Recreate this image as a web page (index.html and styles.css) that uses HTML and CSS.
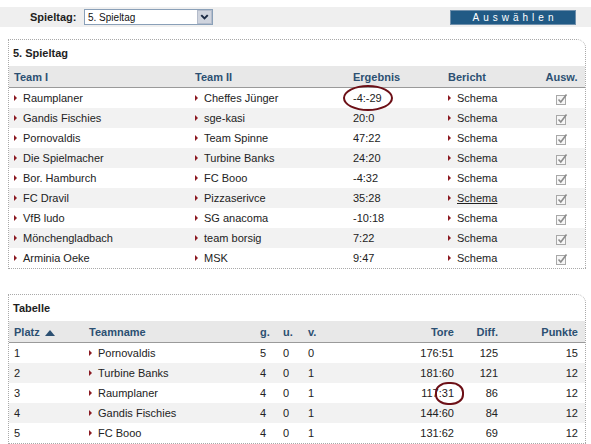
FILE: index.html
```html
<!DOCTYPE html>
<html lang="de">
<head>
<meta charset="utf-8">
<title>Spieltag</title>
<link rel="stylesheet" href="styles.css">
</head>
<body>
<div class="topbar">
  <span class="label">Spieltag:</span>
  <div class="select">
    <span class="select-text">5. Spieltag</span>
    <span class="select-btn"><svg width="14" height="12" viewBox="0 0 14 12"><path d="M3.5 4 L7 7.5 L10.5 4" fill="none" stroke="#1b2a44" stroke-width="2.2"/></svg></span>
  </div>
  <span class="btn">Auswählen</span>
</div>

<div class="box">
  <div class="box-title">5. Spieltag</div>
  <table class="grid">
    <colgroup><col class="c1"><col class="c2"><col class="c3"><col class="c4"><col class="c5"></colgroup>
    <thead>
      <tr><th>Team I</th><th>Team II</th><th>Ergebnis</th><th>Bericht</th><th class="center">Ausw.</th></tr>
    </thead>
    <tbody>
      <tr><td><i class="arr"></i>Raumplaner</td><td><i class="arr"></i>Cheffes Jünger</td><td><span class="circ1">-4:-29</span></td><td><i class="arr"></i>Schema</td><td class="center"><svg class="chk" width="13" height="12" viewBox="0 0 13 12"><rect x="1.5" y="2.5" width="9" height="9" fill="#f6f6f6" stroke="#a8a8a8"/><path d="M3.5 6.5 L5.8 9 L11.5 1.5" fill="none" stroke="#8c8c8c" stroke-width="1.6"/></svg></td></tr>
      <tr><td><i class="arr"></i>Gandis Fischies</td><td><i class="arr"></i>sge-kasi</td><td>20:0</td><td><i class="arr"></i>Schema</td><td class="center"><svg class="chk" width="13" height="12" viewBox="0 0 13 12"><rect x="1.5" y="2.5" width="9" height="9" fill="#f6f6f6" stroke="#a8a8a8"/><path d="M3.5 6.5 L5.8 9 L11.5 1.5" fill="none" stroke="#8c8c8c" stroke-width="1.6"/></svg></td></tr>
      <tr><td><i class="arr"></i>Pornovaldis</td><td><i class="arr"></i>Team Spinne</td><td>47:22</td><td><i class="arr"></i>Schema</td><td class="center"><svg class="chk" width="13" height="12" viewBox="0 0 13 12"><rect x="1.5" y="2.5" width="9" height="9" fill="#f6f6f6" stroke="#a8a8a8"/><path d="M3.5 6.5 L5.8 9 L11.5 1.5" fill="none" stroke="#8c8c8c" stroke-width="1.6"/></svg></td></tr>
      <tr><td><i class="arr"></i>Die Spielmacher</td><td><i class="arr"></i>Turbine Banks</td><td>24:20</td><td><i class="arr"></i>Schema</td><td class="center"><svg class="chk" width="13" height="12" viewBox="0 0 13 12"><rect x="1.5" y="2.5" width="9" height="9" fill="#f6f6f6" stroke="#a8a8a8"/><path d="M3.5 6.5 L5.8 9 L11.5 1.5" fill="none" stroke="#8c8c8c" stroke-width="1.6"/></svg></td></tr>
      <tr><td><i class="arr"></i>Bor. Hamburch</td><td><i class="arr"></i>FC Booo</td><td>-4:32</td><td><i class="arr"></i>Schema</td><td class="center"><svg class="chk" width="13" height="12" viewBox="0 0 13 12"><rect x="1.5" y="2.5" width="9" height="9" fill="#f6f6f6" stroke="#a8a8a8"/><path d="M3.5 6.5 L5.8 9 L11.5 1.5" fill="none" stroke="#8c8c8c" stroke-width="1.6"/></svg></td></tr>
      <tr><td><i class="arr"></i>FC Dravil</td><td><i class="arr"></i>Pizzaserivce</td><td>35:28</td><td><i class="arr"></i><span class="ul">Schema</span></td><td class="center"><svg class="chk" width="13" height="12" viewBox="0 0 13 12"><rect x="1.5" y="2.5" width="9" height="9" fill="#f6f6f6" stroke="#a8a8a8"/><path d="M3.5 6.5 L5.8 9 L11.5 1.5" fill="none" stroke="#8c8c8c" stroke-width="1.6"/></svg></td></tr>
      <tr><td><i class="arr"></i>VfB ludo</td><td><i class="arr"></i>SG anacoma</td><td>-10:18</td><td><i class="arr"></i>Schema</td><td class="center"><svg class="chk" width="13" height="12" viewBox="0 0 13 12"><rect x="1.5" y="2.5" width="9" height="9" fill="#f6f6f6" stroke="#a8a8a8"/><path d="M3.5 6.5 L5.8 9 L11.5 1.5" fill="none" stroke="#8c8c8c" stroke-width="1.6"/></svg></td></tr>
      <tr><td><i class="arr"></i>Mönchengladbach</td><td><i class="arr"></i>team borsig</td><td>7:22</td><td><i class="arr"></i>Schema</td><td class="center"><svg class="chk" width="13" height="12" viewBox="0 0 13 12"><rect x="1.5" y="2.5" width="9" height="9" fill="#f6f6f6" stroke="#a8a8a8"/><path d="M3.5 6.5 L5.8 9 L11.5 1.5" fill="none" stroke="#8c8c8c" stroke-width="1.6"/></svg></td></tr>
      <tr><td><i class="arr"></i>Arminia Oeke</td><td><i class="arr"></i>MSK</td><td>9:47</td><td><i class="arr"></i>Schema</td><td class="center"><svg class="chk" width="13" height="12" viewBox="0 0 13 12"><rect x="1.5" y="2.5" width="9" height="9" fill="#f6f6f6" stroke="#a8a8a8"/><path d="M3.5 6.5 L5.8 9 L11.5 1.5" fill="none" stroke="#8c8c8c" stroke-width="1.6"/></svg></td></tr>
    </tbody>
  </table>
</div>

<div class="box box2">
  <div class="box-title">Tabelle</div>
  <table class="grid">
    <colgroup><col class="t1"><col class="t2"><col class="t3"><col class="t4"><col class="t5"><col class="t6"><col class="t7"><col class="t8"></colgroup>
    <thead>
      <tr><th>Platz <svg class="sort" width="10" height="7" viewBox="0 0 10 7"><path d="M0 7 L5 1 L10 7 Z" fill="#2c5072"/></svg></th><th>Teamname</th><th>g.</th><th>u.</th><th>v.</th><th class="right">Tore</th><th class="right">Diff.</th><th class="right last">Punkte</th></tr>
    </thead>
    <tbody>
      <tr><td>1</td><td><i class="arr"></i>Pornovaldis</td><td>5</td><td>0</td><td>0</td><td class="right">176:51</td><td class="right">125</td><td class="right last">15</td></tr>
      <tr><td>2</td><td><i class="arr"></i>Turbine Banks</td><td>4</td><td>0</td><td>1</td><td class="right">181:60</td><td class="right">121</td><td class="right last">12</td></tr>
      <tr><td>3</td><td><i class="arr"></i>Raumplaner</td><td>4</td><td>0</td><td>1</td><td class="right">117<span class="circ2">:31</span></td><td class="right">86</td><td class="right last">12</td></tr>
      <tr><td>4</td><td><i class="arr"></i>Gandis Fischies</td><td>4</td><td>0</td><td>1</td><td class="right">144:60</td><td class="right">84</td><td class="right last">12</td></tr>
      <tr><td>5</td><td><i class="arr"></i>FC Booo</td><td>4</td><td>0</td><td>1</td><td class="right">131:62</td><td class="right">69</td><td class="right last">12</td></tr>
    </tbody>
  </table>
</div>
</body>
</html>
```

FILE: styles.css
```css
html, body {
  margin: 0;
  padding: 0;
  background: #fff;
}
body {
  font-family: "Liberation Sans", Arial, sans-serif;
  font-size: 11px;
  color: #222;
}

.topbar {
  margin-top: 7px;
  height: 20px;
  background: #efefef;
  display: flex;
  align-items: center;
  padding-left: 30px;
}
.label {
  font-weight: bold;
  font-size: 11px;
  color: #1e1e1e;
  width: 54px;
}
.select {
  width: 129px;
  height: 16px;
  box-sizing: border-box;
  border: 1px solid #8aa0b8;
  background: #fff;
  display: flex;
  align-items: center;
}
.select-text {
  font-size: 10px;
  padding-left: 3px;
  color: #111;
}
.select-btn {
  margin-left: auto;
  width: 15px;
  height: 14px;
  box-sizing: border-box;
  background: #cfd4de;
  border: 1px solid #b4bccb;
  display: flex;
  align-items: center;
  justify-content: center;
}
.select-btn svg {
  display: block;
}
.btn {
  margin-left: 237px;
  width: 126px;
  height: 15px;
  box-sizing: border-box;
  background: #215a85;
  border: 1px solid #6f8fab;
  color: #fff;
  font-size: 10px;
  letter-spacing: 4px;
  text-indent: 4px;
  line-height: 13px;
  text-align: center;
}

.box {
  margin: 12px 5px 0 8px;
  border: 1px dotted #a9a9a9;
  border-top-right-radius: 9px;
}
.box2 {
  margin-top: 25px;
}
.box-title {
  height: 26px;
  line-height: 26px;
  padding-left: 4px;
  font-weight: bold;
  color: #1e1e1e;
}

.grid {
  width: 100%;
  border-collapse: collapse;
  table-layout: fixed;
}
.grid th {
  height: 21px;
  padding: 0 0 0 5px;
  background: #e8e8e8;
  color: #2c5072;
  font-weight: bold;
  text-align: left;
  border-bottom: 1px solid #9a9a9a;
  white-space: nowrap;
}
.grid td {
  height: 20px;
  padding: 0 0 0 5px;
  color: #222;
  white-space: nowrap;
}
.grid tbody tr:nth-child(even) td {
  background: #f2f2f2;
}
.grid .center {
  text-align: center;
  padding-left: 0;
}
.grid .right {
  text-align: right;
  padding-left: 0;
  padding-right: 5px;
}
.grid .last {
  padding-right: 7px;
}

.c1 { width: 181px; }
.c2 { width: 158px; }
.c3 { width: 95px; }
.c4 { width: 95px; }
.c5 { width: 47px; }

.t1 { width: 75px; }
.t2 { width: 171px; }
.t3 { width: 23px; }
.t4 { width: 25px; }
.t5 { width: 77px; }
.t6 { width: 79px; }
.t7 { width: 44px; }
.t8 { width: 82px; }

.arr {
  display: inline-block;
  width: 0;
  height: 0;
  border-left: 3px solid #8b1a22;
  border-top: 3px solid transparent;
  border-bottom: 3px solid transparent;
  margin-right: 6px;
  vertical-align: 1px;
}
.chk {
  display: inline-block;
  vertical-align: middle;
}
.sort {
  vertical-align: 0;
  margin-left: 2px;
}
.ul {
  text-decoration: underline;
}

.circ1, .circ2 {
  position: relative;
}
.circ1::after {
  content: "";
  position: absolute;
  left: -10px;
  top: -7px;
  width: 50px;
  height: 26px;
  box-sizing: border-box;
  border: 2.5px solid #6c0f16;
  border-radius: 50%;
}
.circ2::after {
  content: "";
  position: absolute;
  left: -4px;
  top: -5px;
  width: 29px;
  height: 23px;
  box-sizing: border-box;
  border: 2.5px solid #6c0f16;
  border-radius: 45%;
}
```
